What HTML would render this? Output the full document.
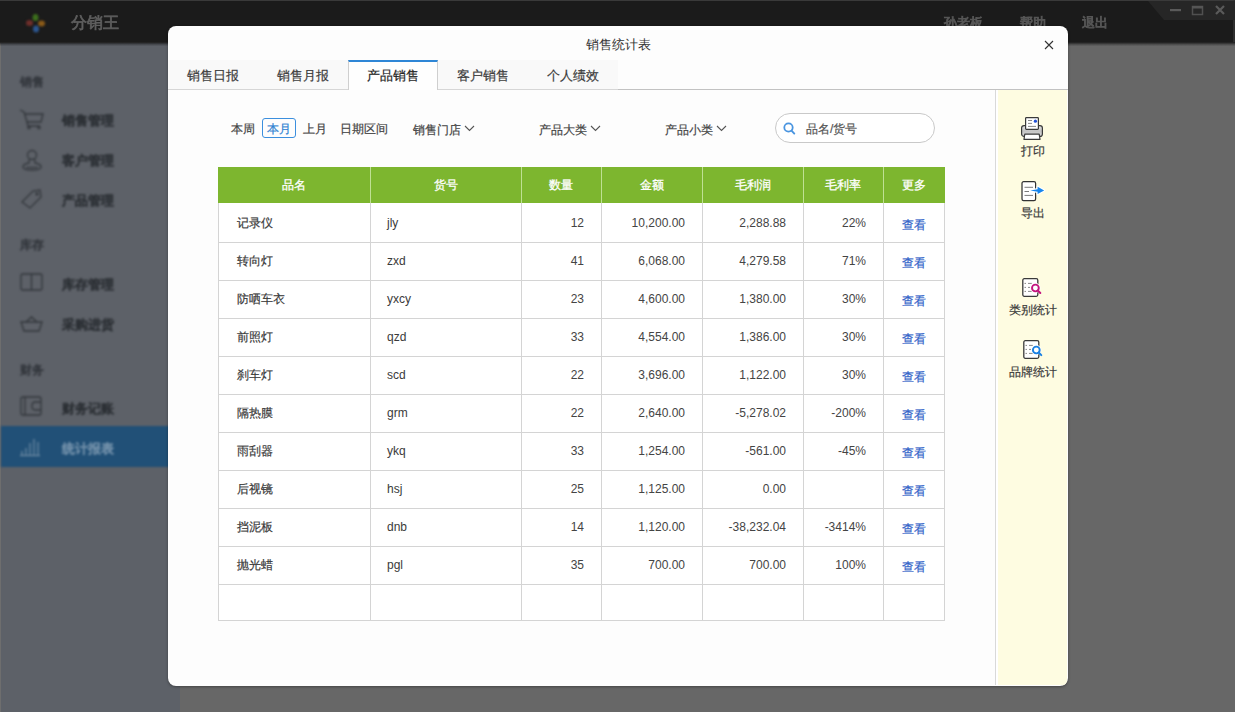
<!DOCTYPE html>
<html><head><meta charset="utf-8">
<style>
*{margin:0;padding:0;box-sizing:border-box}
html,body{width:1235px;height:712px;overflow:hidden;background:#676767;font-family:"Liberation Sans",sans-serif;}
.abs{position:absolute}
#top{left:0;top:0;width:1235px;height:42px;background:#1b1b1b;border-top:1px solid #3a3a3a;border-right:2px solid #2e2e2e}
#side{left:0;top:43px;width:180px;height:669px;background:#5d6168;border-left:1px solid #6e6e6e}
.sl{position:absolute;left:19px;font-size:12px;color:#34383e;-webkit-text-stroke:0.7px #34383e}
.si{position:absolute;left:61px;font-size:13px;color:#2c3035;-webkit-text-stroke:0.9px #2c3035}
#dlg{z-index:2;left:168px;top:26px;width:900px;height:660px;background:#fdfdfd;border-radius:8px;box-shadow:0 1px 3px rgba(0,0,0,0.35);overflow:hidden}
.t{position:absolute;white-space:nowrap}
.tb{font-size:13px;color:#555;-webkit-text-stroke:0.9px #555;filter:blur(0.7px)}
.fl{font-size:12px;color:#444;line-height:20px;height:20px;-webkit-text-stroke:0.2px currentColor}
.th{height:36px;line-height:36px;text-align:center;color:#fff;font-size:12px;-webkit-text-stroke:0.3px #fff}
.td{height:38px;line-height:38px;font-size:12px;color:#3a3a3a}
.cn{-webkit-text-stroke:0.2px currentColor}
.num{text-align:right;color:#444}
.pl{left:830px;width:70px;text-align:center;font-size:12px;color:#3a3a3a;line-height:12px;-webkit-text-stroke:0.2px #3a3a3a}
.lk{text-align:center;color:#2f5fc8;padding-top:2px;-webkit-text-stroke:0.2px #2f5fc8}
.tab{top:34px;width:90px;height:30px;background:#f9f9f9;border-bottom:1px solid #d6d6d6;font-size:13px;color:#3c3c3c;text-align:center;line-height:31px;-webkit-text-stroke:0.2px currentColor}
.tab.act{background:#fefefe;border-top:2px solid #2e86d6;border-left:1px solid #cfcfcf;border-right:1px solid #cfcfcf;border-bottom:none;height:30px;color:#1e1e1e;line-height:28px}
</style></head><body>
<div id="top" class="abs">
  <svg class="abs" style="left:24px;top:11px;filter:blur(0.8px)" width="24" height="24" viewBox="0 0 24 24">
    <ellipse cx="11.5" cy="5.5" rx="3" ry="3.5" fill="#3c6e1c"/>
    <ellipse cx="17.5" cy="11.5" rx="3.5" ry="3" fill="#8a5a18"/>
    <ellipse cx="5.5" cy="11" rx="3.5" ry="3" fill="#6e2e2a"/>
    <ellipse cx="12" cy="17" rx="3" ry="3.5" fill="#2c5690"/>
  </svg>
  <div class="t" style="left:71px;top:12px;font-size:16px;color:#5e5e5e;-webkit-text-stroke:0.7px #5e5e5e;filter:blur(0.6px)">分销王</div>
  <div class="t tb" style="left:944px;top:13px">孙老板</div>
  <div class="t tb" style="left:1020px;top:13px">帮助</div>
  <div class="t tb" style="left:1082px;top:13px">退出</div>
  <svg class="abs" style="left:1146px;top:0px;filter:blur(0.4px)" width="89" height="20" viewBox="0 0 89 20">
    <polygon points="2,0 89,0 89,19 18,19" fill="#262626"/>
    <rect x="24" y="8" width="11" height="2.2" fill="#5a5a5a"/>
    <rect x="46.5" y="5.5" width="10" height="8" fill="none" stroke="#505050" stroke-width="1.5"/>
    <rect x="46" y="5" width="11" height="2.5" fill="#555"/>
    <path d="M70 5 L78 13 M78 5 L70 13" stroke="#5a5a5a" stroke-width="2.2"/>
  </svg>
</div>
<div class="abs" style="left:0;top:42px;width:1235px;height:5px;background:linear-gradient(rgba(10,10,10,.72) 10%,rgba(10,10,10,.5) 30%,rgba(10,10,10,.28) 50%,rgba(10,10,10,.12) 70%,rgba(10,10,10,0) 90%);z-index:1"></div>
<div id="side" class="abs">
  <div class="abs" style="left:0;top:0;width:179px;height:669px;filter:blur(0.9px)">
  <div class="sl" style="top:31px">销售</div>
  <svg class="abs" style="left:17px;top:64px" width="28" height="24" viewBox="0 0 28 24" fill="none" stroke="#33373c" stroke-width="1.3">
    <path d="M2 3 L6 5 L9 15 L23 15 L25 7 L7 7"/><path d="M9 15 L10 19 L22 19"/><circle cx="11" cy="20.5" r="1.2"/><circle cx="21" cy="20.5" r="1.2"/>
  </svg>
  <div class="si" style="top:69px">销售管理</div>
  <svg class="abs" style="left:17px;top:105px" width="28" height="24" viewBox="0 0 28 24" fill="none" stroke="#33373c" stroke-width="1.3">
    <circle cx="14" cy="7" r="4.5"/><path d="M11 11.5 L11 15 Q5 16 5 19 Q5 22 14 22 Q23 22 23 19 Q23 16 17 15 L17 11.5"/><path d="M8 19.5 L20 19.5"/>
  </svg>
  <div class="si" style="top:109px">客户管理</div>
  <svg class="abs" style="left:17px;top:144px" width="28" height="24" viewBox="0 0 28 24" fill="none" stroke="#33373c" stroke-width="1.3">
    <path d="M4 15 L15 4 L22 3 L23 10 L12 21 Z"/><circle cx="19" cy="7" r="1"/>
  </svg>
  <div class="si" style="top:149px">产品管理</div>
  <div class="sl" style="top:194px">库存</div>
  <svg class="abs" style="left:17px;top:228px" width="28" height="24" viewBox="0 0 28 24" fill="none" stroke="#33373c" stroke-width="1.3">
    <rect x="3" y="3" width="21" height="16" rx="1.5"/><path d="M13.5 3 L13.5 19"/>
  </svg>
  <div class="si" style="top:233px">库存管理</div>
  <svg class="abs" style="left:17px;top:270px" width="28" height="24" viewBox="0 0 28 24" fill="none" stroke="#33373c" stroke-width="1.3">
    <path d="M3 9 L24 9 L21 18 L6 18 Z"/><path d="M8 9 L13.5 4 L19 9"/>
  </svg>
  <div class="si" style="top:273px">采购进货</div>
  <div class="sl" style="top:319px">财务</div>
  <svg class="abs" style="left:17px;top:351px" width="28" height="24" viewBox="0 0 28 24" fill="none" stroke="#33373c" stroke-width="1.3">
    <rect x="3" y="3" width="20" height="18" rx="2"/><path d="M23 8 L17 8 Q14 8 14 12 Q14 16 17 16 L23 16"/><path d="M7 3 L7 21"/>
  </svg>
  <div class="si" style="top:357px">财务记账</div>
  <div class="abs" style="left:0;top:383px;width:179px;height:41px;background:#215077"></div>
  <svg class="abs" style="left:17px;top:391px" width="28" height="24" viewBox="0 0 28 24" fill="none" stroke="#6f8ca5" stroke-width="1.2">
    <path d="M4 21 L4 17 M8 21 L8 14 M12 21 L12 9 M16 21 L16 5 M20 21 L20 8"/><path d="M2 21.5 L22 21.5"/>
  </svg>
  <div class="si" style="top:397px;color:#7895ae;-webkit-text-stroke:0.7px #7895ae">统计报表</div>
  </div>
</div>
<div id="dlg" class="abs">
  <div class="t" style="left:0;width:900px;text-align:center;top:10px;font-size:13px;color:#333">销售统计表</div>
  <svg class="abs" style="left:876px;top:14px" width="10" height="10" viewBox="0 0 10 10"><path d="M1 1 L9 9 M9 1 L1 9" stroke="#333" stroke-width="1.1"/></svg>
  <!-- tabs -->
  <div class="abs" style="left:0;top:63px;width:900px;height:1px;background:#c2c2c2"></div>
  <div class="abs tab" style="left:0">销售日报</div>
  <div class="abs tab" style="left:90px">销售月报</div>
  <div class="abs tab act" style="left:180px">产品销售</div>
  <div class="abs tab" style="left:270px">客户销售</div>
  <div class="abs tab" style="left:360px">个人绩效</div>
  <!-- FILTER -->
  <div class="t fl" style="left:63px;top:93px">本周</div>
  <div class="abs" style="left:94px;top:92px;width:34px;height:20px;border:1px solid #3c8fde;border-radius:3px"></div>
  <div class="t fl" style="left:94px;width:34px;text-align:center;top:93px;color:#2f82d2">本月</div>
  <div class="t fl" style="left:135px;top:93px">上月</div>
  <div class="t fl" style="left:172px;top:93px">日期区间</div>
  <div class="t fl" style="left:245px;top:94px">销售门店</div>
  <svg class="abs" style="left:296px;top:99px" width="11" height="7" viewBox="0 0 11 7"><path d="M1 1 L5.5 5.5 L10 1" fill="none" stroke="#555" stroke-width="1.1"/></svg>
  <div class="t fl" style="left:371px;top:94px">产品大类</div>
  <svg class="abs" style="left:422px;top:99px" width="11" height="7" viewBox="0 0 11 7"><path d="M1 1 L5.5 5.5 L10 1" fill="none" stroke="#555" stroke-width="1.1"/></svg>
  <div class="t fl" style="left:497px;top:94px">产品小类</div>
  <svg class="abs" style="left:548px;top:99px" width="11" height="7" viewBox="0 0 11 7"><path d="M1 1 L5.5 5.5 L10 1" fill="none" stroke="#555" stroke-width="1.1"/></svg>
  <div class="abs" style="left:607px;top:87px;width:160px;height:30px;border:1px solid #c9c9c9;border-radius:15px;background:#fff"></div>
  <svg class="abs" style="left:614px;top:95px" width="14" height="14" viewBox="0 0 14 14"><circle cx="6.5" cy="6.5" r="4.2" fill="none" stroke="#4a95e0" stroke-width="1.8"/><path d="M9.5 9.6 L12.3 12.6" stroke="#4a95e0" stroke-width="1.9" stroke-linecap="round"/></svg>
  <div class="t fl" style="left:638px;top:93px;color:#555">品名/货号</div>
  <!-- TABLE -->
  <div class="abs" style="left:50px;top:141px;width:727px;height:454px;background:#fff;border:1px solid #d4d4d4"></div>
  <div class="abs" style="left:50px;top:141px;width:727px;height:36px;background:#7db62f"></div>
  <div class="abs" style="left:202px;top:141px;width:1px;height:36px;background:#bfe093"></div>
  <div class="abs" style="left:202px;top:177px;width:1px;height:417px;background:#d4d4d4"></div>
  <div class="abs" style="left:353px;top:141px;width:1px;height:36px;background:#bfe093"></div>
  <div class="abs" style="left:353px;top:177px;width:1px;height:417px;background:#d4d4d4"></div>
  <div class="abs" style="left:433px;top:141px;width:1px;height:36px;background:#bfe093"></div>
  <div class="abs" style="left:433px;top:177px;width:1px;height:417px;background:#d4d4d4"></div>
  <div class="abs" style="left:534px;top:141px;width:1px;height:36px;background:#bfe093"></div>
  <div class="abs" style="left:534px;top:177px;width:1px;height:417px;background:#d4d4d4"></div>
  <div class="abs" style="left:635px;top:141px;width:1px;height:36px;background:#bfe093"></div>
  <div class="abs" style="left:635px;top:177px;width:1px;height:417px;background:#d4d4d4"></div>
  <div class="abs" style="left:715px;top:141px;width:1px;height:36px;background:#bfe093"></div>
  <div class="abs" style="left:715px;top:177px;width:1px;height:417px;background:#d4d4d4"></div>
  <div class="abs" style="left:50px;top:216px;width:727px;height:1px;background:#d4d4d4"></div>
  <div class="abs" style="left:50px;top:254px;width:727px;height:1px;background:#d4d4d4"></div>
  <div class="abs" style="left:50px;top:292px;width:727px;height:1px;background:#d4d4d4"></div>
  <div class="abs" style="left:50px;top:330px;width:727px;height:1px;background:#d4d4d4"></div>
  <div class="abs" style="left:50px;top:368px;width:727px;height:1px;background:#d4d4d4"></div>
  <div class="abs" style="left:50px;top:406px;width:727px;height:1px;background:#d4d4d4"></div>
  <div class="abs" style="left:50px;top:444px;width:727px;height:1px;background:#d4d4d4"></div>
  <div class="abs" style="left:50px;top:482px;width:727px;height:1px;background:#d4d4d4"></div>
  <div class="abs" style="left:50px;top:520px;width:727px;height:1px;background:#d4d4d4"></div>
  <div class="abs" style="left:50px;top:558px;width:727px;height:1px;background:#d4d4d4"></div>
  <div class="t th" style="left:50px;width:152px;top:141px">品名</div>
  <div class="t th" style="left:202px;width:151px;top:141px">货号</div>
  <div class="t th" style="left:353px;width:80px;top:141px">数量</div>
  <div class="t th" style="left:433px;width:101px;top:141px">金额</div>
  <div class="t th" style="left:534px;width:101px;top:141px">毛利润</div>
  <div class="t th" style="left:635px;width:80px;top:141px">毛利率</div>
  <div class="t th" style="left:715px;width:61px;top:141px">更多</div>
  <div class="t td cn" style="left:69px;top:178px">记录仪</div>
  <div class="t td" style="left:219px;top:178px">jly</div>
  <div class="t td num" style="left:216px;width:200px;top:178px">12</div>
  <div class="t td num" style="left:317px;width:200px;top:178px">10,200.00</div>
  <div class="t td num" style="left:418px;width:200px;top:178px">2,288.88</div>
  <div class="t td num" style="left:498px;width:200px;top:178px">22%</div>
  <div class="t td lk" style="left:715px;width:61px;top:178px">查看</div>
  <div class="t td cn" style="left:69px;top:216px">转向灯</div>
  <div class="t td" style="left:219px;top:216px">zxd</div>
  <div class="t td num" style="left:216px;width:200px;top:216px">41</div>
  <div class="t td num" style="left:317px;width:200px;top:216px">6,068.00</div>
  <div class="t td num" style="left:418px;width:200px;top:216px">4,279.58</div>
  <div class="t td num" style="left:498px;width:200px;top:216px">71%</div>
  <div class="t td lk" style="left:715px;width:61px;top:216px">查看</div>
  <div class="t td cn" style="left:69px;top:254px">防哂车衣</div>
  <div class="t td" style="left:219px;top:254px">yxcy</div>
  <div class="t td num" style="left:216px;width:200px;top:254px">23</div>
  <div class="t td num" style="left:317px;width:200px;top:254px">4,600.00</div>
  <div class="t td num" style="left:418px;width:200px;top:254px">1,380.00</div>
  <div class="t td num" style="left:498px;width:200px;top:254px">30%</div>
  <div class="t td lk" style="left:715px;width:61px;top:254px">查看</div>
  <div class="t td cn" style="left:69px;top:292px">前照灯</div>
  <div class="t td" style="left:219px;top:292px">qzd</div>
  <div class="t td num" style="left:216px;width:200px;top:292px">33</div>
  <div class="t td num" style="left:317px;width:200px;top:292px">4,554.00</div>
  <div class="t td num" style="left:418px;width:200px;top:292px">1,386.00</div>
  <div class="t td num" style="left:498px;width:200px;top:292px">30%</div>
  <div class="t td lk" style="left:715px;width:61px;top:292px">查看</div>
  <div class="t td cn" style="left:69px;top:330px">刹车灯</div>
  <div class="t td" style="left:219px;top:330px">scd</div>
  <div class="t td num" style="left:216px;width:200px;top:330px">22</div>
  <div class="t td num" style="left:317px;width:200px;top:330px">3,696.00</div>
  <div class="t td num" style="left:418px;width:200px;top:330px">1,122.00</div>
  <div class="t td num" style="left:498px;width:200px;top:330px">30%</div>
  <div class="t td lk" style="left:715px;width:61px;top:330px">查看</div>
  <div class="t td cn" style="left:69px;top:368px">隔热膜</div>
  <div class="t td" style="left:219px;top:368px">grm</div>
  <div class="t td num" style="left:216px;width:200px;top:368px">22</div>
  <div class="t td num" style="left:317px;width:200px;top:368px">2,640.00</div>
  <div class="t td num" style="left:418px;width:200px;top:368px">-5,278.02</div>
  <div class="t td num" style="left:498px;width:200px;top:368px">-200%</div>
  <div class="t td lk" style="left:715px;width:61px;top:368px">查看</div>
  <div class="t td cn" style="left:69px;top:406px">雨刮器</div>
  <div class="t td" style="left:219px;top:406px">ykq</div>
  <div class="t td num" style="left:216px;width:200px;top:406px">33</div>
  <div class="t td num" style="left:317px;width:200px;top:406px">1,254.00</div>
  <div class="t td num" style="left:418px;width:200px;top:406px">-561.00</div>
  <div class="t td num" style="left:498px;width:200px;top:406px">-45%</div>
  <div class="t td lk" style="left:715px;width:61px;top:406px">查看</div>
  <div class="t td cn" style="left:69px;top:444px">后视镜</div>
  <div class="t td" style="left:219px;top:444px">hsj</div>
  <div class="t td num" style="left:216px;width:200px;top:444px">25</div>
  <div class="t td num" style="left:317px;width:200px;top:444px">1,125.00</div>
  <div class="t td num" style="left:418px;width:200px;top:444px">0.00</div>
  <div class="t td num" style="left:498px;width:200px;top:444px"></div>
  <div class="t td lk" style="left:715px;width:61px;top:444px">查看</div>
  <div class="t td cn" style="left:69px;top:482px">挡泥板</div>
  <div class="t td" style="left:219px;top:482px">dnb</div>
  <div class="t td num" style="left:216px;width:200px;top:482px">14</div>
  <div class="t td num" style="left:317px;width:200px;top:482px">1,120.00</div>
  <div class="t td num" style="left:418px;width:200px;top:482px">-38,232.04</div>
  <div class="t td num" style="left:498px;width:200px;top:482px">-3414%</div>
  <div class="t td lk" style="left:715px;width:61px;top:482px">查看</div>
  <div class="t td cn" style="left:69px;top:520px">抛光蜡</div>
  <div class="t td" style="left:219px;top:520px">pgl</div>
  <div class="t td num" style="left:216px;width:200px;top:520px">35</div>
  <div class="t td num" style="left:317px;width:200px;top:520px">700.00</div>
  <div class="t td num" style="left:418px;width:200px;top:520px">700.00</div>
  <div class="t td num" style="left:498px;width:200px;top:520px">100%</div>
  <div class="t td lk" style="left:715px;width:61px;top:520px">查看</div>
  <!-- /TABLE -->
  <!-- side panel -->
  <div class="abs" style="left:828px;top:64px;width:71px;height:595px;background:#fefce1;border-left:2px solid #fff;box-shadow:-1px 0 0 #d9d9d9"></div>
  <svg class="abs" style="left:850px;top:88px" width="28" height="28" viewBox="0 0 28 28">
    <defs><linearGradient id="pg" x1="0" y1="0" x2="0" y2="1"><stop offset="0" stop-color="#e6e6e6"/><stop offset="0.5" stop-color="#c4c4c4"/><stop offset="1" stop-color="#dcdcdc"/></linearGradient></defs>
    <rect x="3.6" y="11.6" width="20.8" height="10.8" rx="2.5" fill="url(#pg)" stroke="#3a3a3a" stroke-width="1.2"/>
    <path d="M6.8 20.2 L21.2 20.2 L22 25.4 L6 25.4 Z" fill="#fff" stroke="#3a3a3a" stroke-width="1.2" stroke-linejoin="round"/>
    <rect x="7.6" y="3.6" width="12.8" height="11.8" rx="0.8" fill="#fff" stroke="#3a3a3a" stroke-width="1.2"/>
    <path d="M10 6.5 L14 6.5 M10 9.4 L14 9.4 M10 12.4 L18 12.4" stroke="#888" stroke-width="1"/>
    <circle cx="17.4" cy="7.2" r="1.6" fill="#1f4fd6"/>
  </svg>
  <div class="t pl" style="top:119px">打印</div>
  <svg class="abs" style="left:850px;top:152px" width="28" height="28" viewBox="0 0 28 28">
    <rect x="4" y="3.7" width="13.6" height="18.8" rx="1.6" fill="#fff" stroke="#333" stroke-width="1.25"/>
    <path d="M6.5 9.3 L15 9.3 M6.5 13.5 L11 13.5 M6.5 17.4 L15 17.4" stroke="#7a7a7a" stroke-width="1"/>
    <path d="M12.2 12.6 L19.6 11.2 L19.6 8.8 L26.2 12.4 L19.6 16 L19.6 13.8 Z" fill="#fff" stroke="#fff" stroke-width="2.2" stroke-linejoin="round"/>
    <path d="M12.2 12.6 L19.6 11.2 L19.6 8.8 L26.2 12.4 L19.6 16 L19.6 13.8 Z" fill="#1786ee"/>
  </svg>
  <div class="t pl" style="top:181px">导出</div>
  <svg class="abs" style="left:850px;top:248px" width="28" height="28" viewBox="0 0 28 28">
    <rect x="4.8" y="4.7" width="15" height="17.6" rx="1.5" fill="#fff" stroke="#3a3a3a" stroke-width="1.3"/>
    <path d="M6.5 9.4 L8 9.4 M10 9.4 L13.8 9.4 M6.5 13.4 L8 13.4 M10 13.4 L12 13.4 M6.5 17.4 L8 17.4 M10 17.4 L13.8 17.4" stroke="#888" stroke-width="1"/>
    <circle cx="17.4" cy="14" r="3.6" fill="#fff" stroke="#fff" stroke-width="3"/>
    <circle cx="17.4" cy="14" r="3.4" fill="none" stroke="#c4157f" stroke-width="1.9"/>
    <path d="M19.8 16.5 L22.3 19" stroke="#c4157f" stroke-width="2" stroke-linecap="round"/>
  </svg>
  <div class="t pl" style="top:278px">类别统计</div>
  <svg class="abs" style="left:850px;top:310px" width="28" height="28" viewBox="0 0 28 28">
    <rect x="5.8" y="4.7" width="15" height="17.6" rx="1.5" fill="#fff" stroke="#3a3a3a" stroke-width="1.3"/>
    <path d="M7.5 9.4 L9 9.4 M11 9.4 L14.8 9.4 M7.5 13.4 L9 13.4 M11 13.4 L13 13.4 M7.5 17.4 L9 17.4 M11 17.4 L14.8 17.4" stroke="#888" stroke-width="1"/>
    <circle cx="18.3" cy="14" r="3.6" fill="#fff" stroke="#fff" stroke-width="3"/>
    <circle cx="18.3" cy="14" r="3.4" fill="none" stroke="#1a80e2" stroke-width="1.9"/>
    <path d="M20.7 16.5 L23.3 19.1" stroke="#1a80e2" stroke-width="2" stroke-linecap="round"/>
  </svg>
  <div class="t pl" style="top:340px">品牌统计</div>
</div>
</body></html>
